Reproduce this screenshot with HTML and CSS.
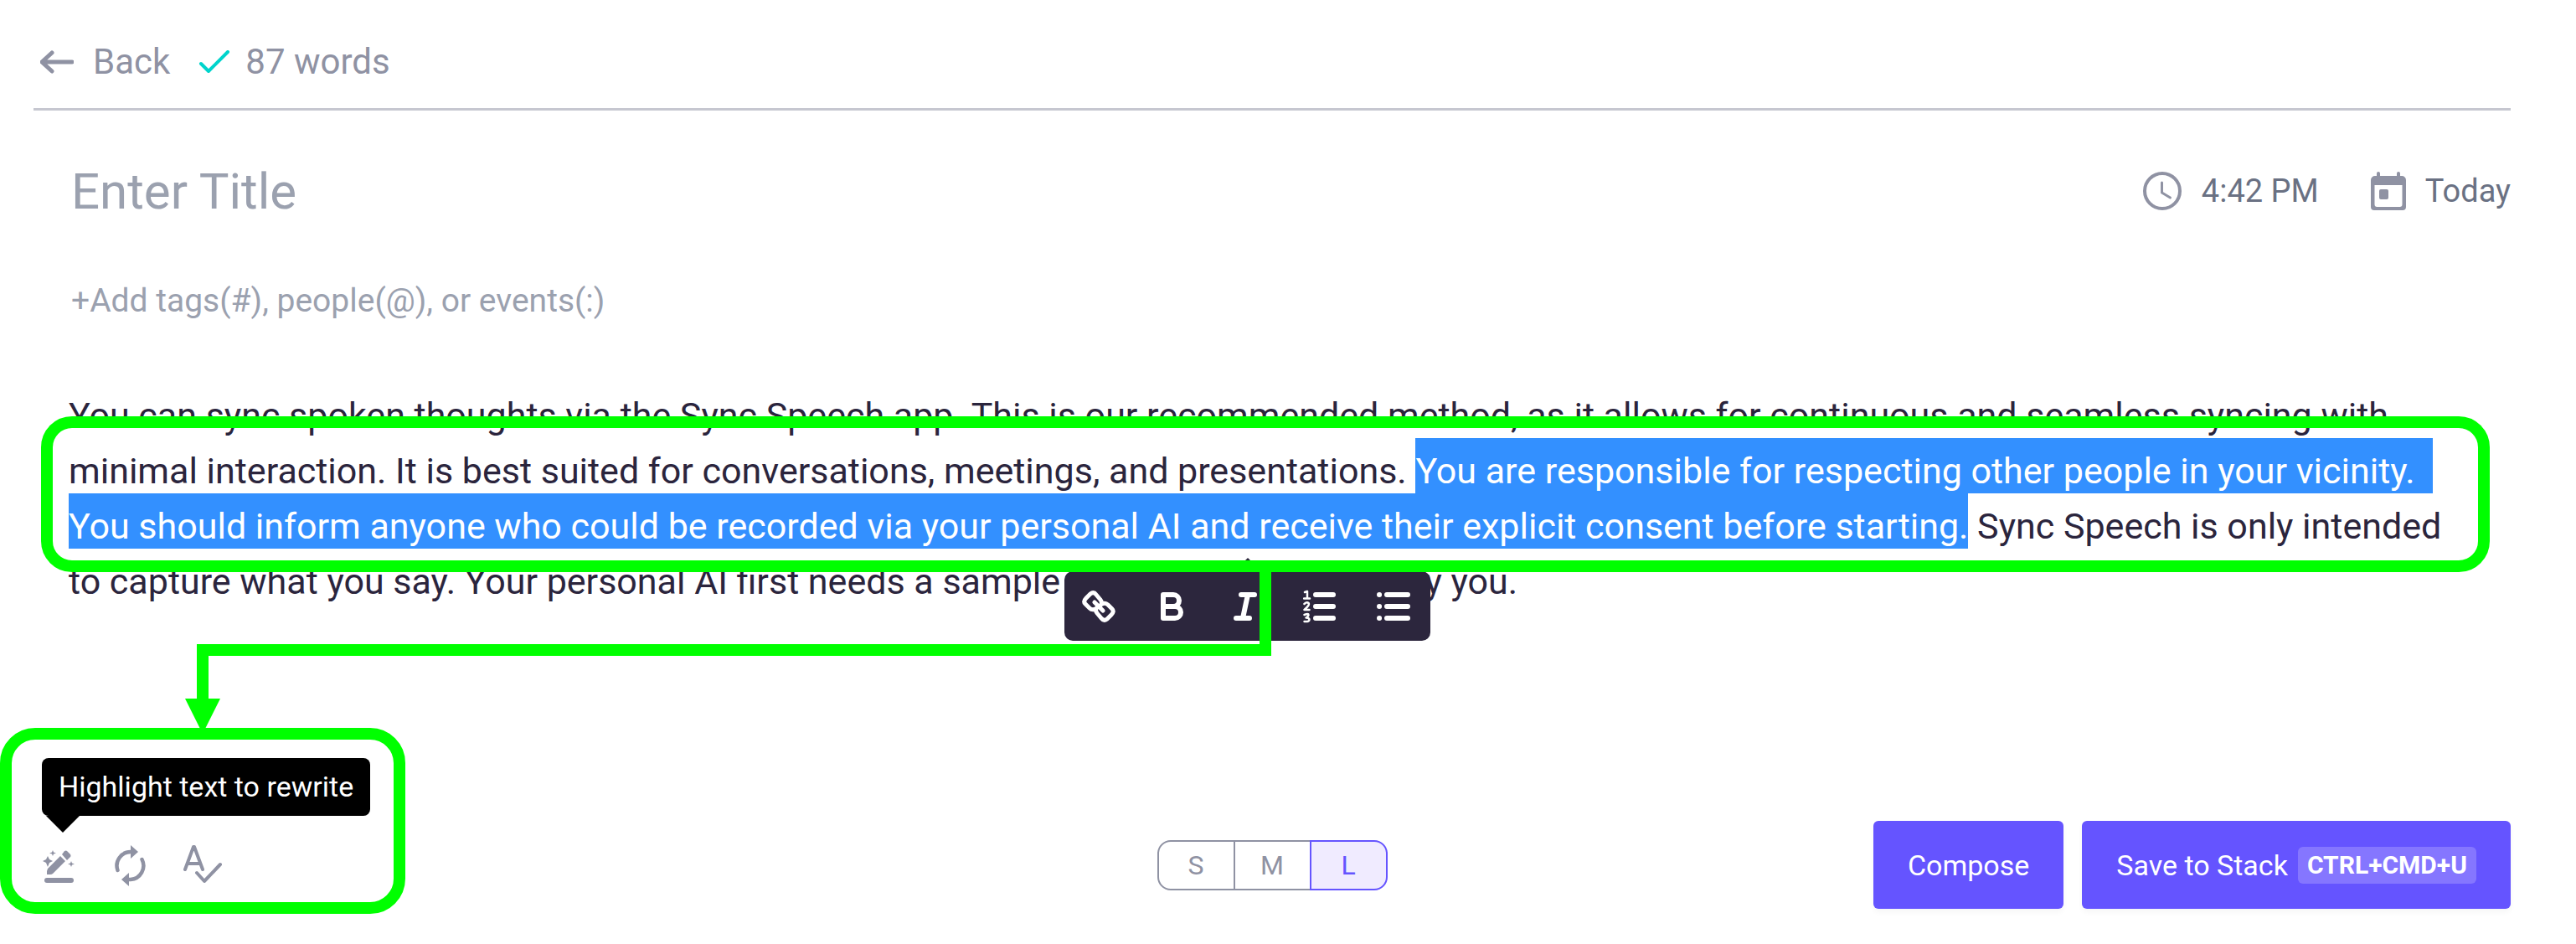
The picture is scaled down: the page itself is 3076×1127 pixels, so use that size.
FILE: index.html
```html
<!DOCTYPE html>
<html lang="en">
<head>
    <meta charset="UTF-8">
    <meta name="viewport" content="width=device-width, initial-scale=1.0">
    <title>Compose</title>
    <link rel="stylesheet" href="styles.css">
</head>
<body>

    <header class="topbar">
        <a href="#" class="back">
            <svg width="40" height="28" viewBox="0 0 40 28" fill="none" stroke="currentColor" stroke-width="5" stroke-linecap="round" stroke-linejoin="round">
                <path d="M38 14H3M14 3L2 14l12 11"/>
            </svg>
            Back
        </a>
        <svg class="check" width="38" height="28" viewBox="0 0 38 28" fill="none" stroke="currentColor" stroke-width="4" stroke-linecap="round" stroke-linejoin="round">
            <path d="M3 16l9 9L35 2"/>
        </svg>
        <span>87 words</span>
    </header>

    <main class="entry">
        <div class="title-row">
            <input type="text" class="title" placeholder="Enter Title" aria-label="Title">
            <button type="button" class="when">
                <svg width="48" height="48" viewBox="0 0 48 48" fill="none" stroke="currentColor" stroke-width="4" stroke-linecap="round" stroke-linejoin="round">
                    <circle cx="24" cy="24" r="21"/>
                    <path d="M23.500 14v12l10 6" stroke-width="3"/>
                </svg>
                4:42 PM
            </button>
            <button type="button" class="when">
                <svg width="42" height="48" viewBox="0 0 42 48">
                    <path d="M7 3a2 2 0 0 1 4 0v3h20V3a2 2 0 0 1 4 0v3h2a5 5 0 0 1 5 5v32a4 4 0 0 1-4 4H4a4 4 0 0 1-4-4V11a5 5 0 0 1 5-5h2zM4.500 17v23a3 3 0 0 0 3 3h27a3 3 0 0 0 3-3V17z" fill="currentColor" fill-rule="evenodd"/>
                    <rect x="10" y="22" width="11" height="12" rx="2" fill="currentColor"/>
                </svg>
                Today
            </button>
        </div>

        <input type="text" class="tags" placeholder="+Add tags(#), people(@), or events(:)" aria-label="Tags">

        <div class="text-wrap">
            <p class="text">
                You can sync spoken thoughts via the Sync Speech app. This is our recommended method, as it allows for continuous and seamless syncing with<br>
                minimal interaction. It is best suited for conversations, meetings, and presentations. <mark>You are responsible for respecting other people in your vicinity.&nbsp;&nbsp;<br>You should inform anyone who could be recorded via your personal AI and receive their explicit consent before starting.</mark> Sync Speech is only intended<br>
                to capture what you say. Your personal AI first needs a sample of your voice to identify you.
            </p>

            <div class="format-bar">
                <button type="button" aria-label="Link">
                    <svg width="40" height="40" viewBox="0 0 40 40" fill="none" stroke="currentColor" stroke-width="5" stroke-linecap="round" stroke-linejoin="round">
                        <path d="M15 15l5 5M22 12l-5-6q-3-4-7-1l-5 5q-4 4-1 7l5 5q3 3 7 1M18 28l5 6q3 4 7 1l5-5q4-4 1-7l-5-5q-3-3-7-1M20 20l5 5M22 12q3 4 0 7M18 28q-3-4 0-7"/>
                    </svg>
                </button>
                <button type="button" aria-label="Bold">
                    <svg width="40" height="40" viewBox="0 0 40 40" fill="none" stroke="currentColor" stroke-width="6" stroke-linejoin="round">
                        <path d="M9 6h12a7 7 0 0 1 0 14H9zM9 20h14a7 7 0 0 1 0 14H9z"/>
                    </svg>
                </button>
                <button type="button" aria-label="Italic">
                    <svg width="40" height="40" viewBox="0 0 40 40" fill="none" stroke="currentColor" stroke-width="6" stroke-linecap="round">
                        <path d="M14 6h16M8 34h16M22 6l-6 28"/>
                    </svg>
                </button>
                <button type="button" aria-label="Numbered list">
                    <svg width="40" height="40" viewBox="0 0 40 40" fill="none" stroke="currentColor" stroke-linecap="round">
                        <path d="M15 6h21M15 20h21M15 34h21" stroke-width="6"/>
                        <path d="M2 3l3-1v8M1 10.500h7M1.500 17q3-3 5-1t-5 8h6M1.500 30q5-2 5 0t-3 3.500q4 0 4 2.500t-6 2" stroke-width="2.500" stroke-linejoin="round"/>
                    </svg>
                </button>
                <button type="button" aria-label="Bulleted list">
                    <svg width="40" height="40" viewBox="0 0 40 40" fill="none" stroke="currentColor" stroke-width="6" stroke-linecap="round">
                        <path d="M3 6h.1M3 20h.1M3 34h.1M12 6h25M12 20h25M12 34h25"/>
                    </svg>
                </button>
            </div>
        </div>
    </main>

    <footer class="bottom">
        <div class="tools">
            <span class="tooltip" role="tooltip">Highlight text to rewrite</span>
            <button type="button" aria-label="Rewrite">
                <svg width="52" height="52" viewBox="0 0 52 52" fill="currentColor">
                    <rect x="9" y="41" width="35" height="6" rx="3"/>
                    <path d="M13 30L28 15l6 6-15 15q-1 1-3 1h-4v-4zM30 13l3-4q2-1 3 0l4 4q1 2 0 3l-4 4z"/>
                    <path d="M13 15l2 4 4 2-4 2-2 5-2-5-4-2 4-2zM19 8l1 2.500 3 1-3 1-1 2.500-1-2.500-3-1 3-1zM41 21l1 2.500 3 1-3 1-1 2.500-1-2.500-3-1 3-1z"/>
                </svg>
            </button>
            <button type="button" aria-label="Regenerate">
                <svg width="52" height="52" viewBox="0 0 52 52" fill="none" stroke="currentColor" stroke-width="4.500" stroke-linecap="round">
                    <path d="M10.500 32A16.500 16.500 0 0 1 26 10h2M39.500 19A16.500 16.500 0 0 1 26 43h-2"/>
                    <path d="M26 2l9 8-9 8zM24 51l-9-8 9-8z" fill="currentColor" stroke="none"/>
                </svg>
            </button>
            <button type="button" aria-label="Check spelling">
                <svg width="52" height="52" viewBox="0 0 52 52" fill="none" stroke="currentColor" stroke-width="4" stroke-linecap="round" stroke-linejoin="round">
                    <path d="M5 31L15 4h1l10 27M9 24h14"/>
                    <path d="M19 35l9 10 19-20"/>
                </svg>
            </button>
        </div>

        <div class="sizes" role="radiogroup" aria-label="Length">
            <input type="radio" name="size" id="size-s">
            <label for="size-s">S</label>
            <input type="radio" name="size" id="size-m">
            <label for="size-m">M</label>
            <input type="radio" name="size" id="size-l" checked>
            <label for="size-l">L</label>
        </div>

        <div class="actions">
            <button type="button" class="primary">Compose</button>
            <button type="button" class="primary">Save to Stack <kbd>CTRL+CMD+U</kbd></button>
        </div>
    </footer>

    <!-- green callouts -->
    <svg class="callouts" width="3076" height="1127" viewBox="0 0 3076 1127" fill="none" stroke="#00ff00" stroke-width="14">
        <rect x="56" y="504" width="2910" height="172" rx="30"/>
        <rect x="7" y="876" width="470" height="208" rx="35"/>
        <path d="M1511 676v100H242v64"/>
        <path d="M221 834h42l-21 42z" fill="#00ff00" stroke="none"/>
    </svg>

</body>
</html>
```
FILE: styles.css
```css
* {
    box-sizing: border-box;
}

body {
    margin: 0;
    padding: 0 78px 42px 40px;
    min-height: 100vh;
    display: flex;
    flex-direction: column;
    position: relative;
    font-family: Roboto, sans-serif;
    background-color: #fff;
    color: #2b253d;
}

button, input {
    font-family: inherit;
    padding: 0;
    border: none;
    background: none;
}

button {
    cursor: pointer;
}

svg {
    display: block;
    flex: none;
}

.topbar {
    display: flex;
    align-items: center;
    padding: 50px 8px 31px;
    border-bottom: 3px solid #c6c7d0;
    font-size: 42px;
    line-height: 48px;
    color: #8f92a3;
}

.back {
    display: flex;
    align-items: center;
    gap: 23px;
    color: inherit;
    text-decoration: none;
}

.check {
    margin: 0 18px 0 34px;
    color: #00d4cc;
}

.entry {
    padding-left: 42px;
}

.title-row {
    display: flex;
    align-items: center;
    gap: 62px;
    margin-top: 60px;
}

.title, .tags {
    display: block;
    padding-left: 3px;
    color: #2b253d;
    outline: none;
}

.title {
    flex: 1;
    min-width: 0;
    height: 72px;
    font-size: 60px;
}

.tags {
    width: 100%;
    height: 48px;
    margin-top: 71px;
    font-size: 39px;
}

.title::placeholder, .tags::placeholder {
    color: #9ba1af;
    opacity: 1;
}

.when {
    display: flex;
    align-items: center;
    gap: 23px;
    font-size: 38px;
    color: #6a7183;
}

.when svg {
    color: #8f92a3;
}

.text-wrap {
    position: relative;
    margin-top: 80px;
}

.text {
    margin: 0;
    font-size: 43px;
    line-height: 66px;
}

.text mark {
    padding: 14px 0 2px;
    background-color: #3390ff;
    color: #fff;
    -webkit-box-decoration-break: clone;
    box-decoration-break: clone;
}

.format-bar {
    position: absolute;
    top: 219px;
    left: 1189px;
    display: flex;
    align-items: center;
    gap: 48px;
    height: 83px;
    padding: 0 24px 0 21px;
    border-radius: 10px;
    background-color: #2c263d;
    color: #fff;
}

.format-bar::before {
    content: "";
    position: absolute;
    left: 50%;
    bottom: 100%;
    margin-left: -16px;
    border: 16px solid transparent;
    border-top: none;
    border-bottom-color: #2c263d;
}

.bottom {
    display: grid;
    grid-template-columns: 1fr auto 1fr;
    align-items: center;
    margin-top: auto;
}

.tools {
    position: relative;
    display: flex;
    gap: 34px;
    padding-left: 4px;
    color: #8f92a3;
}

.tools button, .format-bar button {
    color: inherit;
}

.tooltip {
    position: absolute;
    left: 10px;
    bottom: 85px;
    padding: 0 20px;
    border-radius: 8px;
    background-color: #000;
    color: #fff;
    font-size: 34px;
    line-height: 69px;
    white-space: nowrap;
}

.tooltip::after {
    content: "";
    position: absolute;
    top: 100%;
    left: 5px;
    border: 20px solid transparent;
    border-top-color: #000;
    border-bottom: none;
}

.sizes {
    display: flex;
    position: relative;
}

.sizes input {
    position: absolute;
    opacity: 0;
}

.sizes label {
    width: 93px;
    border: 2px solid #8f92a3;
    font-size: 32px;
    line-height: 56px;
    text-align: center;
    color: #8f92a3;
}

.sizes label + input + label {
    margin-left: -2px;
}

.sizes label:first-of-type {
    border-radius: 16px 0 0 16px;
}

.sizes label:last-of-type {
    border-radius: 0 16px 16px 0;
}

.sizes input:checked + label {
    position: relative;
    border-color: #6554ff;
    background-color: #f0ebff;
    color: #6554ff;
}

.actions {
    display: flex;
    justify-content: flex-end;
    gap: 22px;
}

.primary {
    display: flex;
    align-items: center;
    gap: 12px;
    height: 105px;
    padding: 0 41px;
    border-radius: 6px;
    background-color: #6554ff;
    color: #fff;
    font-size: 34px;
    box-shadow: 0 4px 6px rgba(0, 0, 0, 0.04);
}

.primary kbd {
    padding: 0 11px;
    border-radius: 6px;
    background-color: #8576ff;
    font-family: inherit;
    font-size: 30px;
    font-weight: bold;
    line-height: 44px;
}

.callouts {
    position: absolute;
    top: 0;
    left: 0;
    pointer-events: none;
}
```
